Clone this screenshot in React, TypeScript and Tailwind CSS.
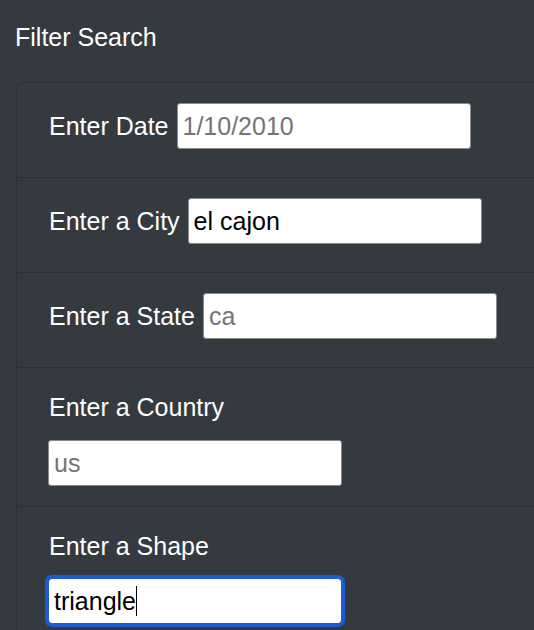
import React from 'react';

const inputBase =
  'w-[294px] h-[46px] bg-white border border-[#8a8a8a] rounded-[3px] px-[5px] text-[25px] text-black placeholder:text-[#757575] outline-none';

function InlineRow({ label, value, placeholder }: { label: string; value?: string; placeholder?: string }) {
  return (
    <div className="flex items-center gap-[8px] pl-[32px] pt-[20px] pb-[28px] border-b border-[#2b3036]">
      <label className="leading-[30px]">{label}</label>
      <input className={inputBase} defaultValue={value} placeholder={placeholder} readOnly={!!value} />
    </div>
  );
}

export default function App() {
  return (
    <div
      className="min-h-screen overflow-hidden bg-[#343a40] text-white text-[25px]"
      style={{ fontFamily: '"Liberation Sans", Arial, sans-serif' }}
    >
      <h5 className="pl-[15px] pt-[22px] leading-[30px]">Filter Search</h5>
      <div className="mt-[30px] ml-[16px] w-[560px] border border-[#2b3036] border-r-0 rounded-tl-[7px]">
        <InlineRow label="Enter Date" placeholder="1/10/2010" />
        <InlineRow label="Enter a City" value="el cajon" />
        <InlineRow label="Enter a State" placeholder="ca" />
        <div className="pl-[32px] pt-[21px] pb-[20px] border-b border-[#2b3036]">
          <label className="block leading-[36px] mb-[15px]">Enter a Country</label>
          <input className={inputBase + ' -ml-[1px]'} placeholder="us" />
        </div>
        <div className="pl-[32px] pt-[21px] pb-[20px]">
          <label className="block leading-[36px] mb-[14px]">Enter a Shape</label>
          <div className="relative w-[294px] -ml-[1px]">
            <input
              autoFocus
              defaultValue="triangle"
              className="w-[294px] h-[46px] bg-white border border-[#1b5cd6] rounded-[4px] px-[5px] text-[25px] text-black caret-black outline-[3px] outline-solid outline-[#1b5cd6]"
            />
            {/* caret drawn over the focused field */}
            <div className="pointer-events-none absolute inset-0 flex items-center px-[6px] text-[25px]">
              <span className="invisible">triangle</span>
              <span className="inline-block w-[1px] h-[30px] bg-black" />
            </div>
          </div>
        </div>
      </div>
    </div>
  );
}
